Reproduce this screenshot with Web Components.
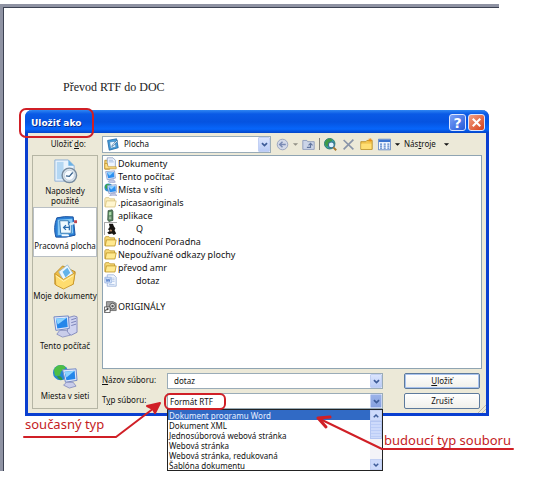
<!DOCTYPE html>
<html lang="sk">
<head>
<meta charset="utf-8">
<title>Uložiť ako</title>
<style>
  body { margin: 0; background: #fff; }
</style>
</head>
<body>
<word-page></word-page>

<script>
const define = (name, html, setup) => {
  const template = document.createElement('template');
  template.innerHTML = html;
  customElements.define(name, class extends HTMLElement {
    connectedCallback() {
      if (this.shadowRoot) return;
      this.attachShadow({ mode: 'open' }).append(template.content.cloneNode(true));
      if (setup) setup(this, this.shadowRoot);
    }
  });
};

const monitor = (x, y) => `<g transform="translate(${x} ${y})"><path d="M0 1 11 0 12 9 2 11Z" fill="#e4e9fa" stroke="#7188bd" stroke-width=".8"/><path d="M1.5 2.2 10 1.4 10.7 8 3 9.3Z" fill="#2b8ff0"/><path d="M1.5 2.2 10 1.4 5 6Z" fill="#8fd0ff"/><path d="M5 11h5l2 3-5 1-4-1.500Z" fill="#c3c9e6" stroke="#8088b8" stroke-width=".6"/></g>`;
const folder = (a, b, line) => `<path d="M1 3.500 2 2h4l1.500 1.500H13V13H1Z" fill="${a}" stroke="${line}" stroke-width=".9"/><path d="M3 6h12l-1.500 7.500H1.500Z" fill="${b}" stroke="${line}" stroke-width=".9"/>`;
const icons = {
  folder: folder('#f6d978', '#ffe98f', '#b98e1e'),
  pale: folder('#fbeebd', '#fff6cf', '#d5bd78'),
  docs: `<path d="M1 4h5l1 2v9H1Z" fill="#f5d36c" stroke="#b88b28"/><path d="M4 1h7l3 3v9H4Z" fill="#eef4ff" stroke="#8297b8" stroke-width=".9"/><path d="M6 4h5M6 6h6" stroke="#9ab4dc"/><path d="M1 8h3l1 4h10v2.500H1Z" fill="#ffdf83" stroke="#b88b28" stroke-width=".8"/>`,
  pc: monitor(2, 1),
  net: `<circle cx="5.500" cy="5.500" r="5" fill="#2c8dce"/><path d="M1 4c2-4 5-3 6-2 0 3-3 2-3 4s-2 2-3-2" fill="#39a84a"/>${monitor(4, 2)}`,
  app: `<path d="M5 2 10 1l1 2v11l-5 1.500-1.500-2Z" fill="#54805b" stroke="#2c4431" stroke-width=".8"/><path d="M6 4l3-.6v4L6 8Z" fill="#a9d8a6"/><path d="M6 10h3M6 12h3" stroke="#d7e5d4"/>`,
  figure: `<path d="M.5 16V.5H16" fill="none" stroke="#8a8a8a"/><path d="M6 2h5l1 3 2 3-1 2 2 4-3 2-2-2-4 1-2-2 3-2-2-2 2-3Z" fill="#161310"/><path d="M8 9l2 1-1 2-2-1Z" fill="#b68b6a"/>`,
  word: `<path d="M4 1h8l3 3v11H4Z" fill="#f3f8ff" stroke="#8fa9d6" stroke-width=".9"/><path d="M10 5h3M10 7h3M10 9h3M6 13h7" stroke="#a9bfe4"/><path d="M1 4h8v7H1Z" fill="#dceaff" stroke="#7e9fd6" stroke-width=".8"/><path d="M2.500 5.500l1.200 4L5 6l1.300 3.500 1.200-4" fill="none" stroke="#4a76c4"/>`,
  shortcut: `<path d="M3 2h8l4 2v9H3Z" fill="#a2a2a2" stroke="#666"/><circle cx="10.500" cy="7.500" r="3.500" fill="#dcdcdc" stroke="#444"/><circle cx="10.500" cy="7.500" r="1.500" fill="#555"/><path d="M.5 8.500h7v7h-7Z" fill="#fff" stroke="#444"/><path d="M2 14c0-3 1-3 3-3M3.500 9.500 5.500 11l-2 1.500" fill="none" stroke="#111"/>`,
  desktop: `<path d="M2 3 13 1l2 11-11 3Z" fill="#46a0dd" stroke="#1f66a6"/><path d="M4.500 5 11 4l1.200 7-6.500 1.500Z" fill="#eef8ff" stroke="#2a74b4" stroke-width=".7"/><path d="M13.500 2.500 8 8.500l-1 2 2-.8 5.500-6Z" fill="#f5fbff" stroke="#245e93" stroke-width=".8"/>`,
  back: `<circle cx="8" cy="8" r="6.500" fill="#d3d9e8" stroke="#8d9ab8"/><path d="M12 8H5M8 4.500 4.500 8 8 11.500" fill="none" stroke="#7a8bb4" stroke-width="1.800"/>`,
  up: `<path d="M1 3h5l1 1.500h8V14H1Z" fill="#ccd5e8" stroke="#8292b6"/><path d="M6 11.500h4.500V7M8 9l2.500-2.500L13 9" fill="none" stroke="#63779f" stroke-width="1.400"/>`,
  search: `<circle cx="7" cy="7" r="6.500" fill="#37a0a4" stroke="#247467"/><path d="M1 6c2-5 6-6 9-4 0 3-4 2-4 5s-2 5-4 2" fill="#3f9a45"/><circle cx="9" cy="8.500" r="3.600" fill="#dff4ff" stroke="#39708f" stroke-width="1.300"/><path d="M11.500 11.500 15 15" stroke="#a6772e" stroke-width="2.400"/>`,
  delete: `<path d="M2 2.500 14 14M14 2 2 14" stroke="#8994a8" stroke-width="2" fill="none"/>`,
  newfolder: `<path d="M1 4.500h6L8.500 3H15v11H1Z" fill="#f3c752" stroke="#b58a1c"/><path d="M1.500 7H14v6.500H1.500Z" fill="#ffdf74"/><path d="M12.500 0v5M10 2.500h5M11 1l3 3M14 1l-3 3" stroke="#f08d16" stroke-width=".9"/>`,
  views: `<path d="M.5 1.500h15v13H.5Z" fill="#f5f9ff" stroke="#4b78c0"/><path d="M1 2h14v3H1Z" fill="#3b74cf"/><path d="M2.500 7.500h2.500m2 0h2.500m2 0h2.500M2.500 10h2.500m2 0h2.500m2 0h2.500M2.500 12.500h2.500m2 0h2.500m2 0h2.500" stroke="#4f7fc8" stroke-width="1.400"/>`,
  caret: `<path d="M2 5h12l-6 6Z" fill="#111"/>`,
  down: `<path d="M3.500 5.500 8 10l4.500-4.500" fill="none" stroke="#3e5c99" stroke-width="3"/>`,
  upward: `<path d="M3.500 10.500 8 6l4.500 4.500" fill="none" stroke="#3e5c99" stroke-width="3"/>`,
  close: `<path d="M4 4l8 8M12 4l-8 8" stroke="#fff" stroke-width="2.200"/>`,
  recent: `<path d="M3 1h14l6 6v16H3Z" fill="#e9f3fd" stroke="#8fb0d4"/><path d="M5 3h7v18H5Z" fill="#b4d7f3"/><path d="M17 1v6h6Z" fill="#6ab1e4"/><circle cx="18" cy="17" r="7.500" fill="#d9e4ee" stroke="#76899c" stroke-width="1.500"/><circle cx="18" cy="17" r="5.200" fill="#f7fbff" stroke="#adbccb" stroke-width=".6"/><path d="M14.500 17.500 18 18l3.500-4" fill="none" stroke="#37618c" stroke-width="1.300"/>`,
  desk: `<path d="M5 4Q13 2 22 3l2 19Q15 25 4 24Q1 14 5 4Z" fill="#2a80d6" stroke="#1a519f"/><path d="M6 6l15-1 1 15-16 2Z" fill="#8acbf6"/><path d="M8 7h9v4h3v9H9Z" fill="#effaff" stroke="#2c72ae" stroke-width=".9"/><path d="M18 14h-6M14.500 11.500 12 14l2.500 2.500M18 8v9" fill="none" stroke="#2a6cae" stroke-width="1.300"/><path d="M18 11l6-2" stroke="#d9edfa" stroke-width="2.400"/><path d="M23 8l3 0" stroke="#c2454d" stroke-width="3"/><path d="M10 21h7l1 2h-8Z" fill="#f4fbff"/>`,
  mydocs: `<path d="M3 10 11 2l13 6-2 13-11 4-8-4Z" fill="#eebd46" stroke="#bd8a20"/><path d="M7 8 16 1l6 9-9 9Z" fill="#eaf6ff" stroke="#8db2d4" stroke-width=".8"/><path d="M11 8l5-4 3 5-5 5Z" fill="#63b3ea"/><path d="M3 10 12 16 24 9l-2 12-10 5-8-4Z" fill="#ffdc6e" stroke="#c8952a" stroke-width=".9"/><path d="M4 12l8 6 10-6" fill="none" stroke="#fff3b8"/>`,
  computer: `<path d="M16 4l7-2 3 1v16l-6 3-4-2Z" fill="#cfd3f0" stroke="#7a82b8" stroke-width=".9"/><path d="M20 6l5-1.500M20 9l5-1.500M20 12l5-1.500" stroke="#7880b6"/><path d="M2 3 17 2l1 13-14 2Z" fill="#dfe7fb" stroke="#7187c4"/><path d="M4 5l11.500-1 .8 9.500L5.500 15Z" fill="#2386ea"/><path d="M4 5l11.500-1L6 11Z" fill="#8bd3ff"/><path d="M8 17h7l4 5-8 2-6-3Z" fill="#c9cdea" stroke="#7d86b9" stroke-width=".8"/>`,
  network: `<circle cx="9" cy="9" r="8" fill="#2587d2"/><path d="M2 6C5 0 11 0 14 3c0 4-5 3-5 6s-3 4-6 3Z" fill="#4ebe45"/><path d="M5 13q4-2 6 3-3 2-6-3" fill="#329b3a"/><path d="M11 6 25 5l1 12-12 2Z" fill="#dfe7fb" stroke="#7187c4"/><path d="M13 8l10.500-1 .7 8.500L15 17Z" fill="#2386ea"/><path d="M13 8l10.500-1L15 14Z" fill="#8bd3ff"/><path d="M15 19h7l3 4-7 2-6-3Z" fill="#c9cdea" stroke="#7d86b9" stroke-width=".8"/>`
};
const large = ['recent', 'desk', 'mydocs', 'computer', 'network'];

define('xp-icon', `<style>
  :host { display: block; flex: none; width: var(--size, 13px); height: var(--size, 13px); }
  svg { display: block; width: 100%; height: 100%; }
</style><svg aria-hidden="true"></svg>`, (el, root) => {
  const name = el.getAttribute('name'), svg = root.querySelector('svg');
  svg.setAttribute('viewBox', large.includes(name) ? '0 0 27 27' : '0 0 16 16');
  svg.innerHTML = icons[name];
});

define('xp-place', `<style>
  :host { display: flex; height: 50px; box-sizing: border-box; }
  button { flex: 1; min-width: 0; padding: 0; border: 1px solid transparent; background: none; font: inherit; line-height: 10px; color: #111;
    display: flex; flex-direction: column; align-items: center; justify-content: center; gap: 1px; white-space: nowrap; }
  :host([selected]) button { background: #fff; border-color: #b9bfc4; }
  xp-icon { --size: 26px; }
</style><button type="button"><xp-icon></xp-icon><span><slot></slot></span></button>`, (el, root) => {
  const old = root.querySelector('xp-icon'), icon = document.createElement('xp-icon');
  icon.setAttribute('name', el.getAttribute('icon'));
  old.replaceWith(icon);
});

define('xp-file', `<style>
  :host { display: flex; align-items: center; height: 13px; gap: 1px; font-size: 9px; line-height: 13px; white-space: nowrap; }
  :host([indent]) span { padding-left: 18px; }
</style><span class="icon"></span><span><slot></slot></span>`, (el, root) => {
  const icon = document.createElement('xp-icon');
  icon.setAttribute('name', el.getAttribute('icon'));
  root.querySelector('.icon').replaceWith(icon);
});

define('xp-drop', `<style>
  :host { display: flex; flex: none; width: 12px; }
  button { flex: 1; padding: 0; border: 1px solid #c2d0f4; border-radius: 1px; background: linear-gradient(#dbe5fe, #b9cbf6); display: grid; place-items: center; }
  :host([pressed]) button { background: linear-gradient(#9bb2e8, #86a1e0); }
  xp-icon { --size: 9px; }
</style><button type="button" aria-label="Rozbaliť"><xp-icon name="down"></xp-icon></button>`);

define('xp-option-list', `<style>
  :host { display: flex; border: 1px solid #222; background: #fff; box-sizing: border-box; }
  select { flex: 1; min-width: 0; height: 60px; margin: 0; padding: 0; border: 0; outline: 0; border-radius: 0; overflow: hidden; background: #fff; color: #111; font: inherit; scrollbar-width: none; }
  option { height: 10px; min-height: 0; line-height: 10px; padding: 0 0 0 1px; }
  option.current { background: #316ac5; color: #e8f0ff; }
  .scroll { width: 12px; display: flex; flex-direction: column; background: #f3f3f8; }
  button { height: 11px; padding: 0; border: 1px solid #c2d0f4; background: #cddafb; display: grid; place-items: center; }
  .thumb { height: 18px; margin-bottom: auto; border: 1px solid #b4c6f2; background: repeating-linear-gradient(#cddafb 0 2px, #bccdf7 2px 3px); box-sizing: border-box; }
  xp-icon { --size: 8px; }
</style>
<select size="6" aria-label="Typ súboru">
  <option class="current">Dokument programu Word</option>
  <option>Dokument XML</option>
  <option>Jednosúborová webová stránka</option>
  <option>Webová stránka</option>
  <option>Webová stránka, redukovaná</option>
  <option>Šablóna dokumentu</option>
</select>
<div class="scroll"><button type="button" aria-label="Hore"><xp-icon name="upward"></xp-icon></button><div class="thumb"></div><button type="button" aria-label="Dole"><xp-icon name="down"></xp-icon></button></div>`);

define('xp-fields', `<style>
  :host { display: grid; grid-template-columns: 65px minmax(0, 1fr) 76px; row-gap: 4px; padding: 4px 2px 0 0; }
  label { line-height: 13px; white-space: nowrap; }
  .box { position: relative; display: flex; height: 16px; box-sizing: border-box; border: 1px solid #9aacb8; background: #fff; margin-right: 21px; }
  input, select { flex: 1; min-width: 0; margin: 0; border: 0; outline: 0; background: none; color: #111; font: inherit; appearance: none; padding: 0 0 0 6px; }
  select { padding: 1px 0 0 2px; }
  .save, .cancel { padding: 0; height: 16px; border: 1px solid #5d7a9c; border-radius: 2px; background: linear-gradient(#fff, #f0f0ea); color: #111; font: inherit; line-height: 12px; }
  .save { box-shadow: inset 0 0 0 1px #a9c3ee; }
  xp-option-list { position: absolute; z-index: 1; top: 15px; left: -1px; right: -1px; }
  .ring { position: absolute; z-index: 2; left: -4px; top: -1px; width: 62px; height: 17px; box-sizing: border-box; border: 2px solid #d01f26; border-radius: 6px; pointer-events: none; }
</style>
<label for="name"><u>N</u>ázov súboru:</label>
<div class="box"><input id="name" value="dotaz"><xp-drop></xp-drop></div>
<button class="save" type="submit"><u>U</u>ložiť</button>
<label for="type">T<u>y</u>p súboru:</label>
<div class="box"><select id="type"><option>Formát RTF</option></select><xp-drop pressed></xp-drop><xp-option-list></xp-option-list><span class="ring"></span></div>
<button class="cancel" type="button">Zrušiť</button>`);

define('xp-toolbar', `<style>
  :host { display: flex; align-items: center; height: 22px; white-space: nowrap; }
  label { width: 54px; text-align: right; }
  .box { flex: 0 1 169px; min-width: 0; margin: 0 5px 0 16px; height: 17px; box-sizing: border-box; border: 1px solid #9aacb8; background: #fff; display: flex; align-items: center; padding-left: 3px; }
  select { flex: 1; min-width: 0; appearance: none; border: 0; outline: 0; background: none; font: inherit; color: #111; padding: 0 0 0 5px; margin: 0; }
  xp-drop { align-self: stretch; }
  button { display: flex; align-items: center; padding: 0; border: 0; background: none; font: inherit; color: #111; }
  nav { display: flex; align-items: center; gap: 5px; }
  .caret { --size: 7px; }
  nav > .caret { margin: 0 -2px; }
  .faint { opacity: .4; }
  hr { width: 1px; height: 12px; margin: 0 -1px; border: 0; background: #85857c; }
  .tools { gap: 7px; }
</style>
<label for="where">Uložiť <u>d</u>o:</label>
<div class="box"><xp-icon name="desktop"></xp-icon><select id="where"><option>Plocha</option></select><xp-drop></xp-drop></div>
<nav>
  <button type="button" aria-label="Späť"><xp-icon name="back"></xp-icon></button>
  <xp-icon class="caret faint" name="caret"></xp-icon>
  <button type="button" aria-label="O úroveň vyššie"><xp-icon name="up"></xp-icon></button>
  <hr>
  <button type="button" aria-label="Hľadať"><xp-icon name="search"></xp-icon></button>
  <button type="button" aria-label="Odstrániť"><xp-icon name="delete"></xp-icon></button>
  <button type="button" aria-label="Nový priečinok"><xp-icon name="newfolder"></xp-icon></button>
  <button type="button" aria-label="Zobrazenia"><xp-icon name="views"></xp-icon></button>
  <xp-icon class="caret" name="caret"></xp-icon>
  <button class="tools" type="button"><span>Nás<u>t</u>roje</span><xp-icon class="caret" name="caret"></xp-icon></button>
</nav>`);

define('save-dialog', `<style>
  :host { display: block; position: relative; border: 3px solid #0a3fd0; border-top: 0; border-radius: 7px 7px 0 0; background: #ece9d8;
    font: 8px/12px "Noto Sans", sans-serif; color: #111; }
  header { display: flex; align-items: center; gap: 2px; height: 23px; margin: 0 -3px; padding: 2px 4px 0 6px; box-sizing: border-box; border-radius: 7px 7px 0 0;
    background: linear-gradient(#2f86f2, #0a5ae6 4px, #0553e0 12px, #0766fb 19px, #0445c8); }
  h1 { flex: 1; margin: 0; font: bold 9px/12px "DejaVu Sans", sans-serif; color: #fff; text-shadow: 1px 1px 0 #0a2d8c; }
  header button { width: 17px; height: 17px; padding: 0; border: 1px solid #dce6ff; border-radius: 3px; background: linear-gradient(135deg, #7ba2f8, #2458d8); color: #fff; font: bold 14px/14px "DejaVu Sans", sans-serif; display: grid; place-items: center; }
  header .close { background: linear-gradient(135deg, #f2a184, #d6401a); }
  .close xp-icon { --size: 15px; }
  main { padding: 0 4px 4px; display: grid; grid-template-columns: 66px minmax(0, 1fr); grid-template-rows: auto 1fr auto; column-gap: 4px; }
  xp-toolbar { grid-column: 1 / -1; }
  aside { grid-row: 2 / 4; padding: 1px 0; border: 1px solid #b5b5a4; }
  section { border: 1px solid #8fa4b2; background: #fff; padding: 1px 0 0 1px; }
  .space { height: 13px; }
  .ring { position: absolute; left: -9px; top: -2px; width: 75px; height: 30px; box-sizing: border-box; border: 2px solid #d01f26; border-radius: 7px; pointer-events: none; }
  .grip { position: absolute; right: 0; bottom: 0; width: 10px; height: 10px; background: repeating-linear-gradient(135deg, transparent 0 2px, #c0bca8 2px 3px); clip-path: polygon(100% 0, 100% 100%, 0 100%); }
</style>
<header><h1>Uložiť ako</h1><button type="button" aria-label="Pomocník">?</button><button class="close" type="button" aria-label="Zavrieť"><xp-icon name="close"></xp-icon></button></header>
<main>
  <xp-toolbar></xp-toolbar>
  <aside>
    <xp-place icon="recent">Naposledy<br>použité</xp-place>
    <xp-place icon="desk" selected>Pracovná plocha</xp-place>
    <xp-place icon="mydocs">Moje dokumenty</xp-place>
    <xp-place icon="computer">Tento počítač</xp-place>
    <xp-place icon="network">Miesta v sieti</xp-place>
  </aside>
  <section aria-label="Súbory">
    <xp-file icon="docs">Dokumenty</xp-file>
    <xp-file icon="pc">Tento počítač</xp-file>
    <xp-file icon="net">Místa v síti</xp-file>
    <xp-file icon="pale">.picasaoriginals</xp-file>
    <xp-file icon="app">aplikace</xp-file>
    <xp-file icon="figure" indent>Q</xp-file>
    <xp-file icon="folder">hodnocení Poradna</xp-file>
    <xp-file icon="folder">Nepoužívané odkazy plochy</xp-file>
    <xp-file icon="folder">převod amr</xp-file>
    <xp-file icon="word" indent>dotaz</xp-file>
    <div class="space"></div>
    <xp-file icon="shortcut">ORIGINÁLY</xp-file>
  </section>
  <xp-fields></xp-fields>
</main>
<span class="grip"></span>
<span class="ring"></span>`);

define('callout-notes', `<style>
  :host { position: absolute; z-index: 3; inset: 0; pointer-events: none; color: #c41c24; font: 13px/18px "Noto Sans", sans-serif; white-space: nowrap; }
  svg { position: absolute; inset: 0; width: 100%; height: 100%; overflow: visible; }
  span { position: absolute; }
  .now { left: 25px; top: 411px; }
  .next { left: 384px; top: 427px; }
</style>
<svg fill="none" stroke="#d01f26" stroke-width="2" stroke-linecap="round" stroke-linejoin="round">
  <path d="M24 433H116L158 401"/><path d="M147 402 160 399 155 409 153 405Z" fill="#d01f26"/>
  <path d="M513 445H382L320 415"/><path d="M330 413 318 414 326 423" stroke-width="3"/>
</svg>
<span class="now">současný typ</span><span class="next">budoucí typ souboru</span>`);

define('word-page', `<style>
  :host { display: block; position: relative; margin: 4px 58px 0 0; height: auto; padding-bottom: 55px; border-top: 3px solid #8f93a3; border-left: 3px solid #8f93a3; background: #fff; }
  .sheet { border: solid #3c4252; border-width: 1px 0 0 1px; position: absolute; inset: 0; }
  p { margin: 0; padding: 72px 0 15px 60px; font: 12px/16px "Liberation Serif", serif; color: #222; }
  save-dialog { margin: 0 10px 0 22px; }
  .over { position: absolute; left: -3px; right: 0; top: -3px; bottom: 0; }
</style>
<div class="sheet"></div>
<p>Převod RTF do DOC</p>
<save-dialog></save-dialog>
<div class="over"><callout-notes></callout-notes></div>`);
</script>
</body>
</html>
